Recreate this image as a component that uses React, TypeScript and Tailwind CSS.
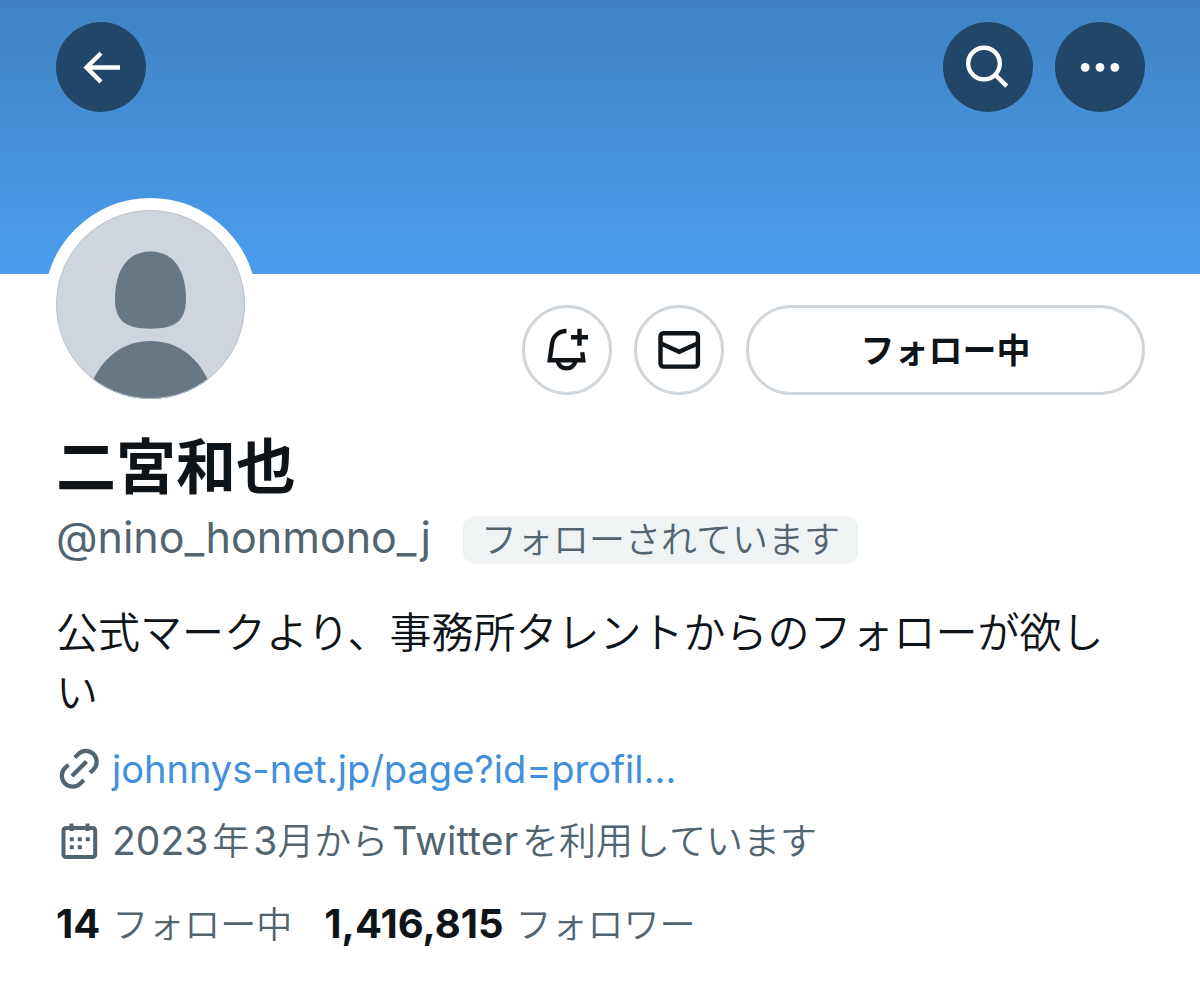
import type { ReactNode } from "react";

function BackIcon() {
  return (
    <svg viewBox="0 0 48 48" className="size-12" fill="none" stroke="currentColor" strokeWidth="4.4" aria-hidden="true">
      <path d="M43 24.5H9M24 10.2 9.5 24.5 24 38.9" />
    </svg>
  );
}

function SearchIcon() {
  return (
    <svg viewBox="0 0 48 48" className="size-12" fill="none" stroke="currentColor" strokeWidth="4.4" aria-hidden="true">
      <circle cx="20" cy="20.6" r="15.8" />
      <path d="M31.2 31.7 42.7 43.1" />
    </svg>
  );
}

function MoreIcon() {
  return (
    <svg viewBox="0 0 48 48" className="size-12" fill="currentColor" aria-hidden="true">
      <circle cx="9.2" cy="24.3" r="4.4" />
      <circle cx="24" cy="24.3" r="4.4" />
      <circle cx="38.8" cy="24.3" r="4.4" />
    </svg>
  );
}

function BellPlusIcon() {
  return (
    <svg viewBox="0.7 0 48 48" className="size-12" fill="none" stroke="currentColor" strokeWidth="4.4" aria-hidden="true">
      <path d="M24.2 5C16 5 10.4 10.6 9.7 18.4L7.4 34.2H41L39.9 26.2" />
      <path d="M15.3 35C16.2 39.6 19.8 42.4 24.2 42.4S32.2 39.6 33.1 35" />
      <path d="M37.2 2.8V19.8M28.7 11.3H45.7" />
    </svg>
  );
}

function MailIcon() {
  return (
    <svg viewBox="0 0 48 48" className="size-12" fill="none" stroke="currentColor" strokeWidth="4.4" aria-hidden="true">
      <rect x="5.5" y="7.2" width="37.4" height="33.4" rx="3" />
      <path d="M6 17.6 24.2 25.8 42.4 17.6" />
    </svg>
  );
}

function LinkIcon() {
  return (
    <svg viewBox="0 0 44 44" className="size-11 shrink-0" fill="none" stroke="currentColor" strokeWidth="4.2" aria-hidden="true">
      <path d="M18.8 10.6 22.2 7.1A10.8 10.8 0 0 1 37.5 22.4L34 25.8" />
      <path d="M27.8 33 24.3 36.4A10.8 10.8 0 0 1 9 21.1L12.5 17.7" />
      <path d="M16 28.9 30.5 14.5" />
    </svg>
  );
}

function CalendarIcon() {
  return (
    <svg viewBox="0 0 44 44" className="size-11 shrink-0" fill="none" stroke="currentColor" strokeWidth="4" aria-hidden="true">
      <rect x="7.5" y="8" width="31.7" height="29" rx="2.5" />
      <path d="M15.5 3.5V11M31.5 3.5V11" />
      <path d="M13.8 19.3h4M21.8 19.3h4M29.8 19.3h4M13.8 27.3h4M21.8 27.3h4" />
    </svg>
  );
}

function Avatar() {
  return (
    <svg viewBox="0 0 189 189" className="size-[189px] rounded-full bg-[#ced5dd]" role="img" aria-label="二宮和也">
      <path
        fill="#697784"
        d="M94.5 41.5C118 41.5 130 61 130 89C130 112 118 118.7 94.5 118.7S59 112 59 89C59 61 71 41.5 94.5 41.5Z"
      />
      <path fill="#697784" d="M94.5 131C120 131 140 145 152 170V189H37V170C49 145 69 131 94.5 131Z" />
      <circle cx="94.5" cy="94.5" r="94" fill="none" stroke="#b9c2cb" strokeWidth="1" />
    </svg>
  );
}

function BannerButton({ label, children }: { label: string; children: ReactNode }) {
  return (
    <button type="button" aria-label={label} className="flex size-[90px] items-center justify-center rounded-full bg-[#224668] text-white">
      {children}
    </button>
  );
}

function OutlineButton({ label, children }: { label: string; children: ReactNode }) {
  return (
    <button type="button" aria-label={label} className="flex size-[90px] items-center justify-center rounded-full border-3 border-[#cfd6dc]">
      {children}
    </button>
  );
}

export default function App() {
  return (
    <div className="min-h-screen bg-white font-['Inter','Noto_Sans_CJK_JP',sans-serif] text-[#0f1419]" lang="ja">
      <header className="flex h-[274px] items-start justify-between bg-linear-to-b from-[#3f83c4] to-[#4b9dec] pt-[22px] pr-[55px] pl-14">
        <BannerButton label="戻る">
          <BackIcon />
        </BannerButton>
        <div className="flex gap-[22px]">
          <BannerButton label="検索">
            <SearchIcon />
          </BannerButton>
          <BannerButton label="もっと見る">
            <MoreIcon />
          </BannerButton>
        </div>
      </header>

      <main className="pr-[55px] pb-8 pl-14">
        <div className="flex items-start justify-between">
          <div className="-mt-[76px] -ml-3 rounded-full bg-white p-3">
            <Avatar />
          </div>
          <div className="flex gap-[22px] pt-[31px]">
            <OutlineButton label="通知">
              <BellPlusIcon />
            </OutlineButton>
            <OutlineButton label="メッセージ">
              <MailIcon />
            </OutlineButton>
            <button type="button" className="h-[90px] w-[399px] rounded-full border-3 border-[#cfd6dc] text-[34px] font-bold">
              フォロー中
            </button>
          </div>
        </div>

        <h1 className="mt-4 text-[60px] leading-[80px] font-bold">二宮和也</h1>
        <div className="flex items-baseline gap-8 text-[#536471]">
          <span className="text-[43px] leading-[60px]">@nino_honmono_j</span>
          <span className="rounded-xl bg-[#eff3f4] px-[18px] text-[36px] leading-[48px] font-[350]">フォローされています</span>
        </div>

        <p className="mt-9 text-[42px] leading-[60px] font-[350]">公式マークより、事務所タレントからのフォローが欲しい</p>

        <div className="mt-4 flex items-center gap-3 text-[#536471]">
          <LinkIcon />
          <a href="#profile" className="text-[38px] leading-[60px] text-[#4190db]">
            johnnys-net.jp/page?id=profil…
          </a>
        </div>
        <div className="mt-3 flex items-center gap-3 text-[#536471]">
          <CalendarIcon />
          <p className="flex items-baseline gap-1 text-[39px] leading-[60px]">
            <span>2023</span>
            <span className="text-[37px] font-[350]">年</span>
            <span>
              3<span className="text-[37px] font-[350]">月から</span>
            </span>
            <span>Twitter</span>
            <span className="text-[37px] font-[350]">を利用しています</span>
          </p>
        </div>

        <div className="mt-[22px] flex gap-8 text-[36px] leading-[60px] text-[#536471]">
          <a href="#following" className="flex items-baseline gap-3">
            <strong className="text-[40px] font-bold text-[#0f1419]">14</strong>
            <span className="font-[350]">フォロー中</span>
          </a>
          <a href="#followers" className="flex items-baseline gap-3">
            <strong className="text-[40px] font-bold text-[#0f1419]">1,416,815</strong>
            <span className="font-[350]">フォロワー</span>
          </a>
        </div>
      </main>
    </div>
  );
}
